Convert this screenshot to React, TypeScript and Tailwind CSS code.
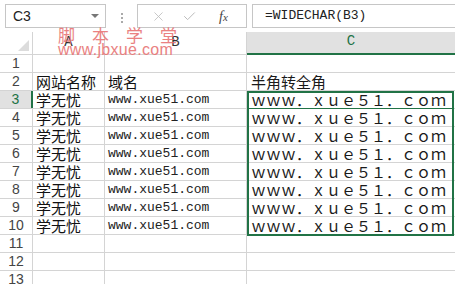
import { Check, X } from "lucide-react";

const rows = [
  { n: 1, a: "", b: "", c: "" },
  { n: 2, a: "网站名称", b: "域名", c: "半角转全角" },
  ...[3, 4, 5, 6, 7, 8, 9, 10].map((n) => ({
    n,
    a: "学无忧",
    b: "www.xue51.com",
    c: "ｗｗｗ．ｘｕｅ５１．ｃｏｍ",
  })),
  { n: 11, a: "", b: "", c: "" },
  { n: 12, a: "", b: "", c: "" },
  { n: 13, a: "", b: "", c: "" },
];

const cjk = "font-['Noto_Sans_CJK_SC',sans-serif]";

export default function App() {
  return (
    <div className="relative w-[455px] h-[284px] overflow-hidden bg-white text-[#111]">
      {/* formula bar */}
      <div className="flex h-[32px] pt-[4px]">
        <div className="ml-[5px] w-[101px] h-[24px] border border-[#c6c6c6] flex items-center justify-between pl-[7px] pr-[6px]">
          <span className="font-['Liberation_Sans',sans-serif] text-[14px] text-[#222]">C3</span>
          <span className="w-0 h-0 border-l-[4px] border-r-[4px] border-t-[4px] border-l-transparent border-r-transparent border-t-[#777]" />
        </div>
        <div className="w-[31px] flex flex-col items-center justify-center gap-[2px]">
          <span className="w-[2px] h-[2px] bg-[#aaa]" />
          <span className="w-[2px] h-[2px] bg-[#aaa]" />
          <span className="w-[2px] h-[2px] bg-[#aaa]" />
        </div>
        <div className="w-[110px] h-[24px] border border-[#c6c6c6] flex items-center pl-[13px]">
          <X size={15} strokeWidth={1.3} className="text-[#bbb]" />
          <Check size={15} strokeWidth={1.6} className="ml-[16px] text-[#bbb]" />
          <span className="ml-[22px] font-['Liberation_Serif',serif] italic text-[14px] text-[#444]">
            f<span className="text-[11px]">x</span>
          </span>
        </div>
        <div className="ml-[5px] flex-1 h-[24px] border border-r-0 border-[#c6c6c6] flex items-center pl-[12px]">
          <span className="font-['Liberation_Mono',monospace] text-[13px] text-[#222]">=WIDECHAR(B3)</span>
        </div>
      </div>

      {/* column headers */}
      <div className="flex h-[23px] border-b border-[#d4d4d4]">
        <div className="w-[33px] border-r border-[#d4d4d4] flex items-end justify-end pr-[3px] pb-[3px]">
          <span className="w-0 h-0 border-l-[11px] border-b-[11px] border-l-transparent border-b-[#dcdcdc]" />
        </div>
        <div className="w-[72px] border-r border-[#d4d4d4] flex items-end justify-center pb-[1px] font-['Liberation_Mono',monospace] text-[14px] text-[#333]">
          A
        </div>
        <div className="w-[142px] border-r border-[#d4d4d4] flex items-end justify-center pb-[1px] font-['Liberation_Mono',monospace] text-[14px] text-[#333]">
          B
        </div>
        <div className="flex-1 bg-[#e1e1e1] border-b-2 border-[#217346] -mb-[1px] flex items-end justify-center pb-[1px] font-['Liberation_Mono',monospace] text-[14px] text-[#217346]">
          C
        </div>
      </div>

      {/* rows */}
      {rows.map((r) => {
        const active = r.n === 3;
        return (
          <div key={r.n} className="flex h-[18px] border-b border-[#d4d4d4]">
            <div
              className={
                active
                  ? "w-[33px] bg-[#e1e1e1] border-r-2 border-[#217346] flex items-center justify-center font-['Liberation_Sans',sans-serif] text-[14px] text-[#217346]"
                  : "w-[33px] border-r border-[#d4d4d4] flex items-center justify-center font-['Liberation_Sans',sans-serif] text-[14px] text-[#444]"
              }
            >
              {r.n}
            </div>
            <div className={`w-[72px] border-r border-[#d4d4d4] flex items-center pl-[3px] whitespace-nowrap ${cjk} text-[15px] leading-none`}>
              {r.a}
            </div>
            <div
              className={
                r.n === 2
                  ? `w-[142px] border-r border-[#d4d4d4] flex items-center pl-[3px] whitespace-nowrap ${cjk} text-[15px] leading-none`
                  : "w-[142px] border-r border-[#d4d4d4] flex items-center pl-[3px] whitespace-nowrap font-['Liberation_Mono',monospace] text-[13px] leading-none text-[#222]"
              }
            >
              {r.b}
            </div>
            <div className={`flex-1 flex items-center pl-[4px] whitespace-nowrap ${cjk} text-[15px] leading-none text-[#1a1a1a]`}>
              {r.c}
            </div>
          </div>
        );
      })}

      {/* selection C3:C10 */}
      <div className="absolute left-[247px] top-[91px] w-[207px] h-[145px] border-2 border-[#217346] pointer-events-none">
        <div className="h-[16px] border-b border-[#217346]" />
      </div>

      {/* watermark */}
      <div className="absolute left-[58px] top-[26px] pointer-events-none text-[#e87474] opacity-90 leading-none">
        <div className={`${cjk} text-[17px] tracking-[17px]`}>脚本学堂</div>
        <div className="font-['Liberation_Sans',sans-serif] text-[16px] tracking-[0.3px] -mt-[1px]">www.jbxue.com</div>
      </div>
    </div>
  );
}
